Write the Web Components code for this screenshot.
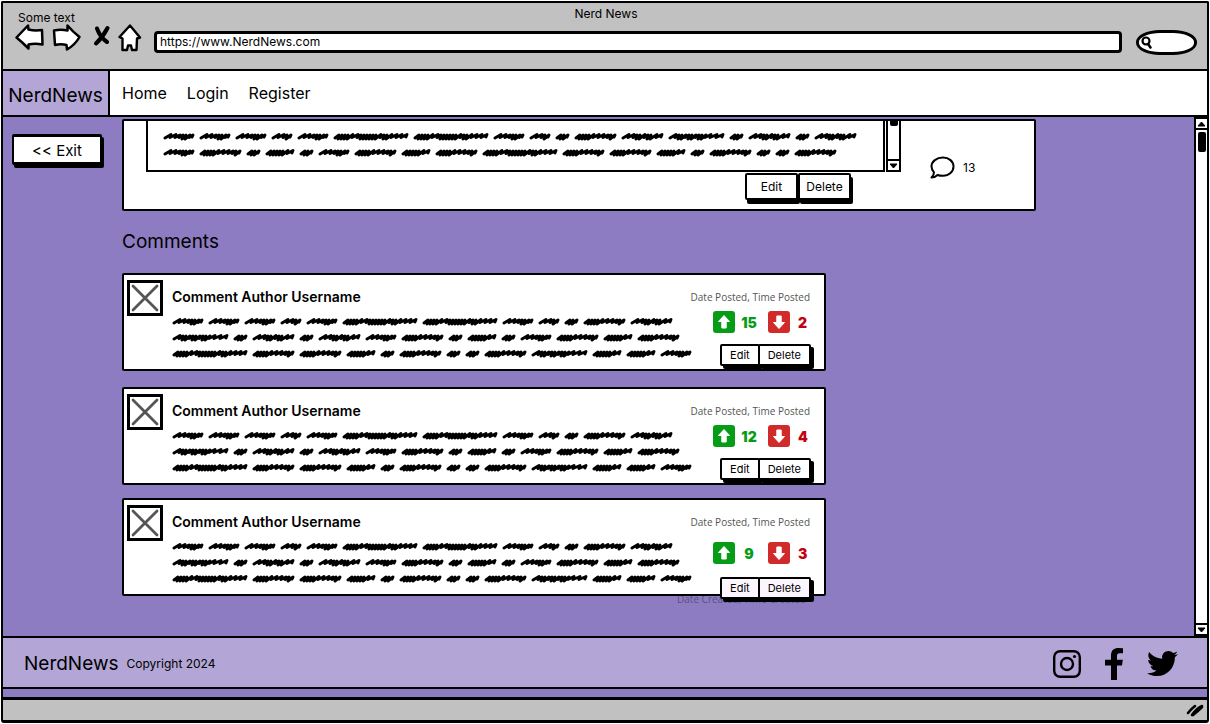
<!DOCTYPE html>
<html lang="en">
<head>
<meta charset="utf-8">
<title>Nerd News</title>
<style>
  body { margin: 0; font-family: Inter, "Noto Sans", sans-serif; color: #000; background: #fff; }
</style>
</head>
<body>
<browser-window caption="Nerd News" hint="Some text" address="https://www.NerdNews.com">
  <site-nav slot="nav"></site-nav>
  <site-main>
    <sketch-button slot="aside" size="large">&lt;&lt; Exit</sketch-button>
    <article-post count="13">
      <scribble-text words="aaabaCCabeDHGeHeH/aDefeaDfDCDDfeDeeD"></scribble-text>
    </article-post>
    <section-title>Comments</section-title>
    <comment-list>
      <comment-card author="Comment Author Username" up="15" down="2"></comment-card>
      <comment-card author="Comment Author Username" up="12" down="4"></comment-card>
      <comment-card author="Comment Author Username" up="9" down="3" last></comment-card>
    </comment-list>
  </site-main>
  <site-footer slot="footer"></site-footer>
</browser-window>

<script>
const define = (name, render) => customElements.define(name, class extends HTMLElement {
  connectedCallback() {
    if (this.shadowRoot) return;
    this.attachShadow({ mode: 'open' }).innerHTML =
      '<style>*{box-sizing:border-box}:host{display:block;box-sizing:border-box}svg{display:block}</style>' + render(this);
  }
});

define('browser-window', el => `
<style>
  :host { display: flex; flex-direction: column; min-height: 100vh; padding: 1px 1px 1px; }
  .top { background: #c1c1c1; border: solid #000; border-width: 2px 2px 0; height: 68px; padding: 1px 10px 0 12px; border-radius: 2px 2px 0 0; }
  .titles { display: grid; height: 22px; font-size: 12px; line-height: 16px; }
  .titles > * { grid-area: 1 / 1; }
  .title { justify-self: center; padding-top: 2px; }
  .hint { align-self: end; padding-left: 3px; }
  .bar { display: flex; align-items: center; height: 24px; }
  .icon { display: block; border: 0; padding: 0; background: none; height: 28px; margin-right: 8px; }
  .icon.stop { margin: 0 8px 0 4px; }
  .icon.home { margin-right: 12px; }
  .address { flex: 1; min-width: 0; height: 22px; margin-top: 8px; border: 3px solid #000; border-radius: 4px; padding: 0 3px 2px; background: #fff; font: 12px Inter, sans-serif; color: #000; }
  .search { display: flex; align-items: center; width: 61px; height: 25px; margin: 8px 0 0 14px; border: 3px solid #000; border-radius: 24px / 12px; background: #fff; padding-left: 2px; }
  .search input { flex: 1; min-width: 0; border: 0; padding: 0; background: none; outline: 0; font: 12px Inter, sans-serif; }
  .page { flex: 1; display: flex; flex-direction: column; background: #8d7cc1; border: solid #000; border-width: 0 2px; }
  .status { display: flex; justify-content: flex-end; align-items: center; height: 26px; background: #c1c1c1; border: solid #000; border-width: 3px 2px; border-radius: 0 0 3px 3px; padding-right: 3px; }
</style>
<header class="top">
  <div class="titles"><span class="title">${el.getAttribute('caption')}</span><span class="hint">${el.getAttribute('hint')}</span></div>
  <div class="bar">
    <button class="icon" aria-label="Back"><svg width="29" height="28" viewBox="0 0 29 28"><path d="M1.500 13.500 13 1.500l.5 4Q20 7 27 6l.5 14.500Q20 19 13.500 20.500v4Q7 18 1.500 13.500z" fill="#fff" stroke="#000" stroke-width="2.500" stroke-linejoin="round"/></svg></button>
    <button class="icon" aria-label="Forward"><svg width="29" height="28" viewBox="0 0 29 28"><path d="M27.500 13Q21 8 15.500 1.500v5Q9 5 2 6.500L3 21Q9 19.500 14.500 21l.5 4.500Q23 21 27.500 13z" fill="#fff" stroke="#000" stroke-width="2.500" stroke-linejoin="round"/></svg></button>
    <button class="icon stop" aria-label="Stop"><svg width="17" height="28" viewBox="0 0 17 28"><path d="M4 4.500Q7 13 14 18M14.500 4Q10 13 3 19.500" fill="none" stroke="#000" stroke-width="4" stroke-linecap="round"/></svg></button>
    <button class="icon home" aria-label="Home"><svg width="24" height="28" viewBox="0 0 24 28"><path d="M12 1.500 1.500 13l3 1.500L4.500 26H9l1-4.500h3l1 4.500h4.500l.5-11.500 3-1z" fill="#fff" stroke="#000" stroke-width="2.400" stroke-linejoin="round"/></svg></button>
    <input class="address" type="text" aria-label="Address" value="${el.getAttribute('address')}">
    <label class="search"><svg width="11" height="13" viewBox="0 0 11 13"><circle cx="5" cy="5" r="3.500" fill="none" stroke="#000" stroke-width="2.200"/><path d="M7 8l2.500 3.500" stroke="#000" stroke-width="2.500" stroke-linecap="round"/></svg><input type="text" aria-label="Search"></label>
  </div>
</header>
<div class="page"><slot name="nav"></slot><slot></slot><slot name="footer"></slot></div>
<div class="status"><svg width="18" height="14" viewBox="0 0 18 14"><path d="M2 10Q5 6 9 3M6 12Q11 5 16 3M7 12Q12 8 16 4" fill="none" stroke="#000" stroke-width="2.600" stroke-linecap="round"/></svg></div>`);

define('site-nav', () => `
<style>
  :host { background: #fff; border: solid #000; border-width: 2px 0; height: 48px; }
  nav { display: flex; height: 100%; align-items: center; gap: 20px; font-size: 16px; }
  a { color: inherit; text-decoration: none; }
  .logo { display: flex; align-items: center; justify-content: center; width: 107px; height: 100%; padding-top: 5px; margin-right: -8px; border-right: 2px solid #000; background: #b3a6d6; font-size: 19px; }
</style>
<nav><a class="logo" href="#">NerdNews</a><a href="#">Home</a><a href="#">Login</a><a href="#">Register</a></nav>`);

define('site-main', () => `
<style>
  :host { display: flex; flex: 1; }
  aside { width: 119px; padding: 17px 0 0 9px; }
  main { flex: 1; min-width: 0; padding-top: 2px; }
  scroll-rail { width: 13px; }
</style>
<aside><slot name="aside"></slot></aside><main><slot></slot></main><scroll-rail></scroll-rail>`);

define('scroll-rail', el => {
  const tail = el.hasAttribute('tail');
  const tri = d => `<svg width="9" height="6" viewBox="0 0 9 6"><path d="${d}" stroke="#000" stroke-linejoin="round"/></svg>`;
  return `
<style>
  :host { display: flex; flex-direction: column; background: #fff; border: solid #000; border-width: ${tail ? '0 2px 2px' : '2px 0 2px 2px'}; }
  .cap { display: flex; align-items: center; justify-content: center; height: 11px; }
  .up { border-bottom: 2px solid #000; }
  .down { border-top: 2px solid #000; }
  .track { flex: 1; padding-top: ${tail ? 0 : 2}px; }
  .thumb { width: 8px; height: ${tail ? 5 : 20}px; margin: 0 auto; background: #000; border-radius: ${tail ? '0 0 2px 2px' : '2px'}; }
</style>
${tail ? '' : `<div class="cap up">${tri('M1 5h7L4.500 1z')}</div>`}
<div class="track"><div class="thumb"></div></div>
<div class="cap down">${tri('M1 1h7L4.500 5z')}</div>`;
});

define('sketch-button', el => {
  const s = {
    large: 'height:31px;width:90px;font-size:15px;border-width:3px 2px;box-shadow:2px 3px #000;padding-top:2px;',
    medium: 'height:27px;min-width:53px;font-size:12px;padding:0 4px;border-width:2px;box-shadow:2px 4px #000;',
    small: 'height:22px;min-width:37px;font-size:11px;padding:0 8px;border-width:2px;box-shadow:3px 3px #000;'
  }[el.getAttribute('size')];
  return `
<style>
  button { display: block; border: solid #000; border-radius: 2px; background: var(--button-fill, #fff); color: #000; font-family: Inter, sans-serif; white-space: nowrap; ${s} }
</style>
<button type="button"><slot></slot></button>`;
});

/* Placeholder writing: each letter names a word shape given as gaps between its pen strokes. */
const SHAPES = {
  a: [5, 5, 4, 3, 3, 4, 3], b: [5, 5, 3, 4], e: [3, 3, 4],
  f: [3, 3, 3, 3, 3, 5, 5], D: [3, 3, 3, 3, 5, 5, 5, 4, 3, 4],
  H: [5, 5, 3, 3, 5, 3, 3, 6, 5], G: [5, 3, 3, 4, 3, 3, 4, 3, 3, 4, 5, 6, 6],
  C: [3, 3, 3, 3, 5, 5, 3, 3, 3, 3, 3, 3, 5, 3, 3, 5, 5, 5, 5]
};
const WIDTHS = { a: 31, b: 21, e: 14, f: 29, D: 42, H: 42, G: 56, C: 75 };
define('scribble-text', el => {
  const lines = el.getAttribute('words').split('/').map(line => {
    let x = 0, d = '';
    for (const w of line) {
      let p = x + 2;
      d += `M${p} 10`;
      SHAPES[w].forEach((g, i) => {
        const end = p + g;
        const right = x + WIDTHS[w] - 1;
        d += `L${Math.min(end + 1, right)} ${g > 4 ? 6.5 : 7}`;
        if (i < SHAPES[w].length - 1) d += `L${end} ${g < 4 ? 11 : 9.5}`;
        else d += `L${right - 1} 9`;
        p = end;
      });
      x += WIDTHS[w] + 5;
    }
    return `<svg width="${x}" height="16" viewBox="0 0 ${x} 16"><path d="${d}" fill="none" stroke="#000" stroke-width="2.900" stroke-linecap="round" stroke-linejoin="round"/></svg>`;
  });
  return lines.join('');
});

define('article-post', el => `
<style>
  :host { display: flex; height: 92px; margin-right: 158px; border: 2px solid #000; border-radius: 2px; background: #fff; }
  .column { width: 755px; margin-left: 22px; }
  .view { display: flex; height: 51px; }
  .text { flex: 1; min-width: 0; overflow: hidden; margin-right: 1px; padding: 7px 15px 0; border: 2px solid #000; border-top: 0; }
  scroll-rail { width: 15px; }
  .actions { display: flex; justify-content: flex-end; margin: 1px 50px 0 0; }
  .count { display: flex; align-items: center; height: 92px; gap: 8px; margin-left: 29px; font-size: 12px; }
</style>
<div class="column">
  <div class="view"><div class="text"><slot></slot></div><scroll-rail tail></scroll-rail></div>
  <div class="actions"><sketch-button size="medium">Edit</sketch-button><sketch-button size="medium">Delete</sketch-button></div>
</div>
<div class="count"><svg width="25" height="23" viewBox="0 0 25 23"><path d="M13 1.500C6.500 1.500 1.500 5.500 1.500 10.500c0 2.300 1 4 2.500 5.800C4 18.500 3 20 1.500 21.500c2.500 0 4.500-1 6-2.500 1.700.6 3.500.8 5.500.8 6 0 10.500-4.300 10.500-9.300S19 1.500 13 1.500z" fill="none" stroke="#000" stroke-width="2" stroke-linejoin="round"/></svg><span>${el.getAttribute('count')}</span></div>`);

define('section-title', () => `
<style>h2 { margin: 19px 0; font-size: 19px; line-height: 24px; font-weight: 400; }</style>
<h2><slot></slot></h2>`);

define('comment-list', () => `
<style>:host { display: flex; flex-direction: column; gap: 16px; max-width: 704px; }</style><slot></slot>`);

define('comment-card', el => {
  const last = el.hasAttribute('last');
  const arrow = (color, turn) => `<svg width="22" height="22" viewBox="0 0 22 22"><rect width="22" height="22" rx="3" fill="${color}"/><path d="M11 4.500 5.500 10.500h3.300V17h4.400v-6.500h3.300z" fill="#fff" stroke="#fff" stroke-linejoin="round" transform="rotate(${turn} 11 11)"/></svg>`;
  return `
<style>
  :host { position: relative; z-index: 0; ${last ? '--button-fill:#fdf5fd;margin-top:-3px;' : ''} }
  article { display: flex; height: 98px; padding: 5px 14px 0 3px; border: 2px solid #000; border-radius: 2px; background: #fff; }
  .avatar { width: 36px; height: 36px; margin-right: 9px; border: 3px solid #000; background: #fff; }
  .body { flex: 1; min-width: 0; }
  h3 { margin: 9px 0 8px; font-size: 14px; line-height: 16px; font-weight: 600; }
  .meta { display: flex; flex-direction: column; align-items: flex-end; padding-top: 9px; }
  time { font-size: 10px; line-height: 16px; color: #555; font-family: "Open Sans", sans-serif; white-space: nowrap; }
  .votes { display: grid; grid-template-columns: 22px 33px 22px 20px; align-items: center; justify-items: start; height: 22px; margin: ${last ? 12 : 6}px 0 ${last ? 13 : 11}px; font-size: 14px; font-weight: 700; }
  .up { color: #079c16; } .down { color: #c30010; }
  .votes .down { padding-left: 8px; }
  .votes .up { width: 28px; text-align: center; }
  .actions { display: flex; margin-right: -1px; }
  .actions sketch-button + sketch-button { margin-left: -2px; }
  .created { position: absolute; z-index: -1; right: 20px; bottom: -11px; font: 10px/16px "Open Sans", sans-serif; color: #5b507d; }
</style>
<article>
  <svg class="avatar" viewBox="0 0 30 30"><path d="M3 3 27 27M27 3 3 27" stroke="#555" stroke-width="2.800" stroke-linecap="round"/></svg>
  <div class="body"><h3>${el.getAttribute('author')}</h3><scribble-text words="aaabaCCabeDH/GeHeHaDefeaDfD/CDDfeDeeDGffa"></scribble-text></div>
  <div class="meta">
    <time>Date Posted, Time Posted</time>
    <div class="votes">${arrow('#079c16', 0)}<b class="up">${el.getAttribute('up')}</b>${arrow('#d12a2a', 180)}<b class="down">${el.getAttribute('down')}</b></div>
    <div class="actions"><sketch-button size="small">Edit</sketch-button><sketch-button size="small">Delete</sketch-button></div>
  </div>
</article>
${last ? '<span class="created">Date Created, Time Created</span>' : ''}`;
});

define('site-footer', () => `
<style>
  :host { margin-bottom: 8px; }
  footer { display: flex; align-items: center; height: 53px; padding: 2px 29px 0 21px; border: solid #000; border-width: 2px 0; background: #b3a6d6; }
  .logo { font-size: 19px; margin-right: 8px; }
  small { flex: 1; font-size: 12px; }
  .social { display: flex; align-items: center; gap: 24px; }
  a { display: block; color: #000; }
</style>
<footer>
  <span class="logo">NerdNews</span><small>Copyright 2024</small>
  <div class="social">
    <a href="#" aria-label="Instagram"><svg width="28" height="28" viewBox="0 0 28 28" fill="none" stroke="#000" stroke-width="2.400"><rect x="1.200" y="1.200" width="25.600" height="25.600" rx="6"/><circle cx="14" cy="14" r="6"/><circle cx="21.500" cy="6.500" r="1.600" fill="#000" stroke="none"/></svg></a>
    <a href="#" aria-label="Facebook"><svg width="18" height="32" viewBox="0 0 18 32"><path d="M18 .3v5h-3.100c-2.400 0-2.900 1.100-2.900 2.800v3.600h5.800l-.8 5.800h-5V32H6V17.500H0v-5.800h6V7.400C6 2.400 9 0 13.500 0z"/></svg></a>
    <a href="#" aria-label="Twitter"><svg width="31" height="31" viewBox="0 0 512 512"><path d="M459.370 151.716c.325 4.548.325 9.097.325 13.645 0 138.720-105.583 298.558-298.558 298.558-59.452 0-114.680-17.219-161.137-47.106 8.447.974 16.568 1.299 25.340 1.299 49.055 0 94.213-16.568 130.274-44.832-46.132-.975-84.792-31.188-98.112-72.772 6.498.974 12.995 1.624 19.818 1.624 9.421 0 18.843-1.300 27.614-3.573-48.081-9.747-84.143-51.980-84.143-102.985v-1.299c13.969 7.797 30.214 12.670 47.431 13.319-28.264-18.843-46.781-51.005-46.781-87.391 0-19.492 5.197-37.360 14.294-52.954 51.655 63.675 129.300 105.258 216.365 109.807-1.624-7.797-2.599-15.918-2.599-24.040 0-57.828 46.782-104.934 104.934-104.934 30.213 0 57.502 12.670 76.670 33.137 23.715-4.548 46.456-13.320 66.599-25.340-7.798 24.366-24.366 44.833-46.132 57.827 21.117-2.273 41.584-8.122 60.426-16.243-14.292 20.791-32.161 39.308-52.628 54.253z"/></svg></a>
  </div>
</footer>`);
</script>
</body>
</html>
